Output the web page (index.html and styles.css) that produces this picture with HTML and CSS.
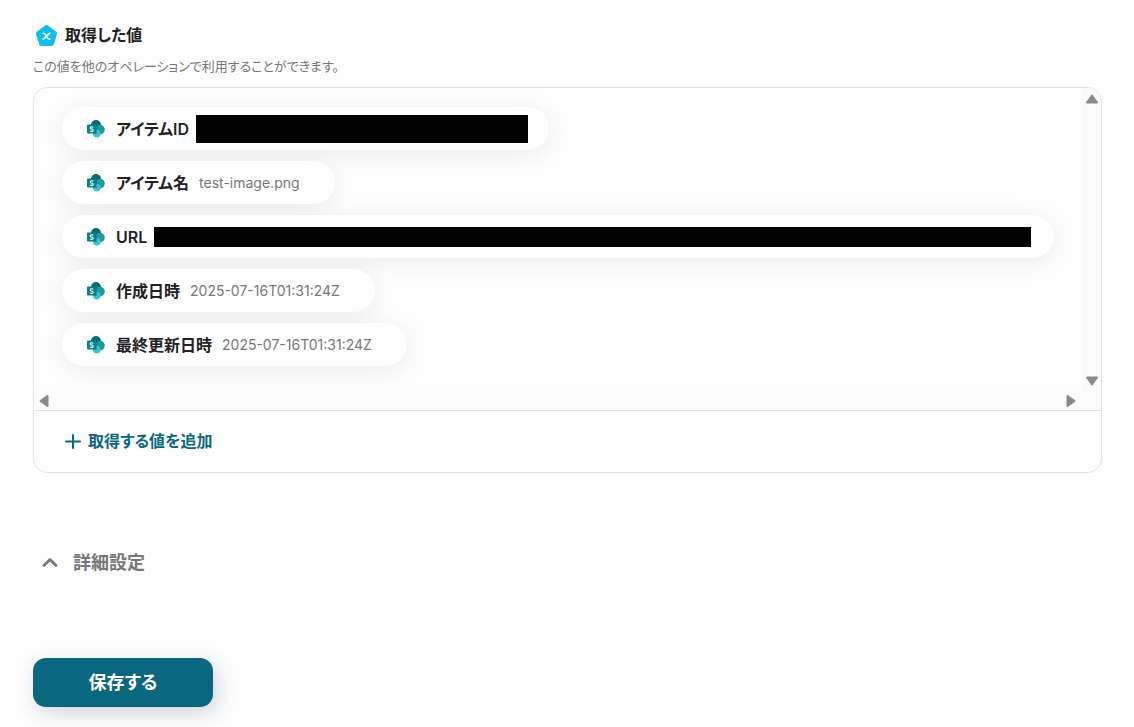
FILE: index.html
```html
<!DOCTYPE html>
<html lang="ja">
<head>
  <meta charset="UTF-8">
  <meta name="viewport" content="width=device-width, initial-scale=1.0">
  <title>取得した値</title>
  <link rel="stylesheet" href="styles.css">
</head>
<body>

  <!-- SharePoint icon shared by every row -->
  <svg width="0" height="0" class="sprite" aria-hidden="true">
    <symbol id="sharepoint" viewBox="0 0 20 20">
      <circle cx="10" cy="6" r="5" fill="#036c70"/>
      <circle cx="14" cy="10.6" r="4.8" fill="#1a9ba1"/>
      <circle cx="10.8" cy="14.8" r="3.7" fill="#37c6d0"/>
      <path d="M5 6h6v9H7.2A4 4 0 0 1 5 11z" fill="#025c60" opacity=".4"/>
      <rect x="1" y="5.5" width="9" height="9" rx="1" fill="#038387"/>
      <path d="M7.3 8.3C6.5 7.6 4.2 7.5 4.2 8.9c0 1.3 3 .9 3 2.4 0 1.4-2.3 1.3-3.3.6" fill="none" stroke="#fff" stroke-width="1.1"/>
    </symbol>
  </svg>

  <main class="container">
    <h2 class="title">
      <svg class="title-icon" viewBox="0 0 24 24" aria-hidden="true">
        <path d="M11.5 4.5 19.5 10.5 16.5 20.5H6.5L3.5 10.5z" fill="#11bdf0" stroke="#11bdf0" stroke-width="5" stroke-linejoin="round"/>
        <path d="M7.6 10.3h1.2c1.8 0 3.3 5.7 5.2 5.7h1.4M15.4 10.1c-2.8 0-4.8 6.1-7.9 6.1" fill="none" stroke="#fff" stroke-width="1.6"/>
      </svg>
      取得した値
    </h2>
    <p class="description">この値を他のオペレーションで利用することができます。</p>

    <section class="panel">
      <div class="scroll-area">
        <ul class="values">
          <li class="chip chip-masked">
            <svg class="chip-icon" aria-hidden="true"><use href="#sharepoint"/></svg>
            <span class="chip-label">アイテムID</span>
            <span class="mask mask-id"></span>
          </li>
          <li class="chip">
            <svg class="chip-icon" aria-hidden="true"><use href="#sharepoint"/></svg>
            <span class="chip-label">アイテム名</span>
            <span class="chip-value">test-image.png</span>
          </li>
          <li class="chip chip-wide">
            <svg class="chip-icon" aria-hidden="true"><use href="#sharepoint"/></svg>
            <span class="chip-label">URL</span>
            <span class="mask mask-url"></span>
          </li>
          <li class="chip">
            <svg class="chip-icon" aria-hidden="true"><use href="#sharepoint"/></svg>
            <span class="chip-label">作成日時</span>
            <span class="chip-value">2025-07-16T01:31:24Z</span>
          </li>
          <li class="chip">
            <svg class="chip-icon" aria-hidden="true"><use href="#sharepoint"/></svg>
            <span class="chip-label">最終更新日時</span>
            <span class="chip-value">2025-07-16T01:31:24Z</span>
          </li>
        </ul>
        <div class="rail rail-y">
          <svg class="arrow" viewBox="0 0 14 10" aria-hidden="true"><path d="M7 1.5 12 8.5H2z"/></svg>
          <svg class="arrow" viewBox="0 0 14 10" aria-hidden="true"><path d="M7 8.5 2 1.5h10z"/></svg>
        </div>
        <div class="rail rail-x">
          <svg class="arrow-side" viewBox="0 0 10 14" aria-hidden="true"><path d="M1.5 7 8.5 2v10z"/></svg>
          <svg class="arrow-side" viewBox="0 0 10 14" aria-hidden="true"><path d="M8.5 7 1.5 2v10z"/></svg>
        </div>
      </div>
      <div class="panel-footer">
        <button type="button" class="add-btn">
          <svg class="add-icon" viewBox="0 0 16 16" aria-hidden="true"><path d="M8 1v13M1 7.5h14" fill="none" stroke="currentColor" stroke-width="2" stroke-linecap="round"/></svg>
          取得する値を追加
        </button>
      </div>
    </section>

    <button type="button" class="details-btn" aria-expanded="false">
      <svg class="details-icon" viewBox="0 0 16 16" aria-hidden="true"><path d="M2 10.5l6-6 6 6" fill="none" stroke="currentColor" stroke-width="2.8" stroke-linecap="round" stroke-linejoin="round"/></svg>
      詳細設定
    </button>

    <button type="submit" class="save-btn">保存する</button>
  </main>

</body>
</html>
```
FILE: styles.css
```css
* {
  box-sizing: border-box;
}

body {
  margin: 0;
  font-family: Inter, 'Noto Sans CJK JP', sans-serif;
  font-feature-settings: "palt";
  color: #222;
  background-color: #fefefe;
}

button {
  font-family: inherit;
  font-feature-settings: inherit;
  border: none;
  background: none;
  padding: 0;
  cursor: pointer;
}

.sprite {
  position: absolute;
}

.container {
  padding: 23px 32px 20px 33px;
}

.title {
  display: flex;
  align-items: center;
  gap: 6px;
  margin: 0;
  padding-left: 2px;
  font-size: 16px;
  font-weight: 600;
  line-height: 24px;
}

.title-icon {
  width: 24px;
  height: 24px;
}

.description {
  margin: 9px 0 11px;
  font-size: 13px;
  line-height: 20px;
  color: #777;
}

.panel {
  border: 1px solid #e3e3e3;
  border-radius: 14px;
  overflow: hidden;
}

.scroll-area {
  display: grid;
  grid-template-columns: minmax(0, 1fr) 19px;
  border-bottom: 1px solid #e3e3e3;
}

.values {
  display: flex;
  flex-direction: column;
  align-items: flex-start;
  gap: 11px;
  margin: 0;
  padding: 19px 28px 25px;
  list-style: none;
  overflow: hidden;
}

.chip {
  display: flex;
  align-items: center;
  height: 43px;
  max-width: 100%;
  padding: 0 35px 0 24px;
  border-radius: 22px;
  background: #fff;
  box-shadow: 0 4px 24px rgba(0, 0, 0, 0.08);
}

.chip-masked {
  padding-right: 21px;
}

.chip-wide {
  width: 100%;
  padding-right: 23px;
}

.chip-icon {
  flex: none;
  width: 20px;
  height: 20px;
  margin-right: 10px;
}

.chip-label {
  font-size: 16px;
  font-weight: 600;
  line-height: 24px;
}

.chip-value {
  margin-left: 10px;
  font-size: 14px;
  line-height: 20px;
  color: #777;
}

.mask {
  margin-left: 7px;
  background: #000;
}

.mask-id {
  width: 332px;
  height: 28px;
}

.mask-url {
  flex: 1;
  height: 20px;
}

.rail {
  display: flex;
  justify-content: space-between;
  align-items: center;
  background: #fbfbfb;
}

.rail-y {
  flex-direction: column;
  padding: 6px 0 5px;
}

.rail-x {
  grid-column: 1 / -1;
  height: 19px;
  padding: 0 25px 0 5px;
}

.arrow {
  width: 14px;
  height: 10px;
}

.arrow-side {
  width: 10px;
  height: 14px;
}

.arrow path,
.arrow-side path {
  fill: #8b8b8b;
  stroke: #8b8b8b;
  stroke-width: 2;
  stroke-linejoin: round;
}

.panel-footer {
  padding: 18px 31px;
}

.add-btn {
  display: flex;
  align-items: center;
  gap: 7px;
  font-size: 16px;
  font-weight: 600;
  line-height: 25px;
  color: #0a6780;
}

.add-icon {
  width: 16px;
  height: 16px;
}

.details-btn {
  display: flex;
  align-items: center;
  gap: 15px;
  margin: 76px 0 82px 9px;
  font-size: 18px;
  font-weight: 600;
  line-height: 27px;
  color: #777;
}

.details-icon {
  width: 16px;
  height: 16px;
}

.save-btn {
  display: block;
  width: 180px;
  height: 49px;
  padding-bottom: 3px;
  border-radius: 13px;
  background-color: #0a6780;
  color: #fff;
  font-size: 18px;
  font-weight: 700;
  box-shadow: 4px 6px 20px rgba(10, 50, 70, 0.2);
}
```
